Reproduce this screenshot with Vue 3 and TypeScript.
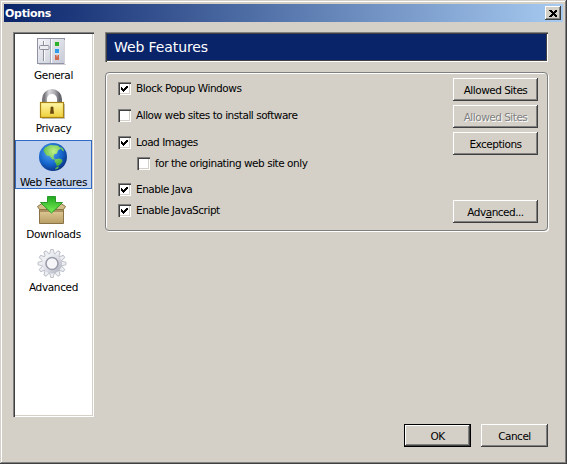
<script setup lang="ts">
interface Opt { label: string; checked: boolean; sub?: boolean; gap: number }
const options: Opt[] = [
  { label: 'Block Popup Windows', checked: true, gap: 0 },
  { label: 'Allow web sites to install software', checked: false, gap: 11 },
  { label: 'Load Images', checked: true, gap: 11 },
  { label: 'for the originating web site only', checked: false, sub: true, gap: 5 },
  { label: 'Enable Java', checked: true, gap: 10 },
  { label: 'Enable JavaScript', checked: true, gap: 5 },
]
const teeth: number[] = Array.from({ length: 12 }, (_, i) => i * 30)
</script>

<template>
  <div class="window">
    <header class="titlebar">
      <span class="title">Options</span>
      <button class="close" aria-label="Close">
        <svg width="8" height="7" viewBox="0 0 8 7"><path d="M0 0h2l2 2 2-2h2v1L5.500 3.500 8 6v1H6L4 5 2 7H0V6l2.500-2.500L0 1z" fill="#000" shape-rendering="crispEdges"/></svg>
      </button>
    </header>
    <div class="body">
      <div class="main">
        <nav class="sidebar">
          <div class="nav-item">
            <svg width="32" height="34" viewBox="0 0 32 34">
              <defs><linearGradient id="panel" x1="0" y1="0" x2="1" y2="1"><stop offset="0" stop-color="#f4f4f8"/><stop offset="1" stop-color="#c6cad6"/></linearGradient></defs>
              <rect x="0.500" y="4.500" width="27" height="25" fill="url(#panel)" stroke="#8f93a4"/>
              <path d="M27.500 6v25M2 30.500h27" stroke="#d2d2d6"/>
              <path d="M13.500 5v24" stroke="#a8acba"/><path d="M14.500 5v24" stroke="#fff"/>
              <path d="M6.500 7v20" stroke="#8b8f9c"/><path d="M7.500 7v20" stroke="#fff"/>
              <rect x="2.500" y="11.500" width="9.500" height="4" rx="1" fill="#eceef2" stroke="#8d909c"/>
              <rect x="17.500" y="7.500" width="5" height="5" fill="#2db02d" stroke="#dfe6d8"/>
              <rect x="17.500" y="14.500" width="5" height="5" fill="#2f9ae8" stroke="#d4e0ee"/>
              <path d="M18 21h1.500v1.500h1V21H22v5h-4z" fill="#cf6a4e"/>
            </svg>
            <span>General</span>
          </div>
          <div class="nav-item">
            <svg width="32" height="34" viewBox="0 0 32 34">
              <defs>
                <linearGradient id="shackle" x1="0" y1="0" x2="1" y2="0"><stop offset="0" stop-color="#77777c"/><stop offset=".3" stop-color="#dcdce0"/><stop offset=".7" stop-color="#a8a8ae"/><stop offset="1" stop-color="#66666e"/></linearGradient>
                <linearGradient id="lockb" x1="0" y1="0" x2="0" y2="1"><stop offset="0" stop-color="#fff7a8"/><stop offset="1" stop-color="#efcf3a"/></linearGradient>
              </defs>
              <path d="M7.500 17v-5a7.500 7.500 0 0 1 15 0v5" fill="none" stroke="url(#shackle)" stroke-width="5"/>
              <path d="M27 17h1v15H5v-1h22z" fill="#c4c4c8"/>
              <rect x="3.500" y="15.500" width="23" height="15" fill="url(#lockb)" stroke="#a98410" stroke-width="1.200"/>
              <path d="M15 19.500a1.500 1.500 0 0 1 1.400 2.200l.6 5h-4l.6-5a1.500 1.500 0 0 1 1.400-2.200z" fill="#6b4a10"/>
            </svg>
            <span>Privacy</span>
          </div>
          <div class="nav-item selected">
            <svg width="32" height="34" viewBox="0 0 32 34">
              <defs>
                <radialGradient id="globe" cx=".4" cy=".35" r=".75"><stop offset="0" stop-color="#58a8f2"/><stop offset=".55" stop-color="#1566cc"/><stop offset="1" stop-color="#082470"/></radialGradient>
                <radialGradient id="land" cx=".5" cy=".3" r=".8"><stop offset="0" stop-color="#c0f288"/><stop offset="1" stop-color="#2fa22c"/></radialGradient>
              </defs>
              <circle cx="16" cy="17" r="14" fill="url(#globe)"/>
              <path d="M8 7.500l5-2.500 8 .5 3 3-3 2-1 3-3 1-.5 3 2 2h-3l-3-3.500-3-.5-2-3-1-2zM18 19.500l4-1 3 1 .5 2-2.500 3-3 2-1-3-1.500-2zM23 6.500l3 2 1 3-2-1z" fill="url(#land)"/>
              <path d="M19 27.500l3-1-1 2-3 1z" fill="#62c044"/>
            </svg>
            <span>Web Features</span>
          </div>
          <div class="nav-item">
            <svg width="32" height="34" viewBox="0 0 32 34">
              <defs>
                <linearGradient id="box" x1="0" y1="0" x2="0" y2="1"><stop offset="0" stop-color="#e2cc98"/><stop offset="1" stop-color="#b89e66"/></linearGradient>
                <linearGradient id="arrow" x1="0" y1="0" x2="0" y2="1"><stop offset="0" stop-color="#1fa81f"/><stop offset="1" stop-color="#7cf058"/></linearGradient>
              </defs>
              <path d="M2.500 16.500h24v14h-24z" fill="url(#box)" stroke="#8a7344"/>
              <path d="M2.500 16.500L0.500 13.500l6-4 4 7zM26.500 16.500l2-3-6-4-4 7z" fill="#d2bc88" stroke="#8a7344"/>
              <path d="M3 17h23v2H3z" fill="#8d7445" opacity=".65"/>
              <path d="M10.500 3.500h8v6h7L14.500 20 3.500 9.500h7z" fill="url(#arrow)" stroke="#2a9a2a"/>
            </svg>
            <span>Downloads</span>
          </div>
          <div class="nav-item">
            <svg width="32" height="34" viewBox="0 0 32 34">
              <defs><linearGradient id="gear" x1="0" y1="0" x2="1" y2="1"><stop offset="0" stop-color="#fcfcfe"/><stop offset=".55" stop-color="#dadce4"/><stop offset="1" stop-color="#a4a8b4"/></linearGradient></defs>
              <g stroke="#a8acb8" stroke-width=".7" fill="#eceef2">
                <path v-for="a in teeth" :key="a" d="M12.500 8.500l1.200-5h2.600l1.200 5z" :transform="`rotate(${a} 15 17.500)`"/>
              </g>
              <circle cx="15" cy="17.500" r="10" fill="url(#gear)"/>
              <circle cx="15" cy="17.500" r="6" fill="#f6f6f8" stroke="#9a9eab" stroke-width="1.600"/>
            </svg>
            <span>Advanced</span>
          </div>
        </nav>
        <section class="content">
          <h1 class="heading">Web Features</h1>
          <div class="group">
            <div class="checks">
              <label v-for="o in options" :key="o.label" class="check" :class="{ sub: o.sub }" :style="{ marginTop: o.gap + 'px' }">
                <span class="box">
                  <svg v-if="o.checked" width="9" height="9" viewBox="0 0 9 9"><path d="M1 3h1v1h1v1h1V4h1V3h1V2h2v2H7v1H6v1H5v1H4v1H3V7H2V6H1z" fill="#000" shape-rendering="crispEdges"/></svg>
                </span>
                <span>{{ o.label }}</span>
              </label>
            </div>
            <div class="side-buttons">
              <button class="btn wide">Allowed Sites</button>
              <button class="btn wide disabled">Allowed Sites</button>
              <button class="btn wide">Exceptions</button>
              <button class="btn wide adv">Adv<u>a</u>nced...</button>
            </div>
          </div>
        </section>
      </div>
      <footer class="footer">
        <button class="btn dlg default">OK</button>
        <button class="btn dlg">Cancel</button>
      </footer>
    </div>
  </div>
</template>

<style>
html, body { margin: 0; background: #d4d0c8; }
</style>

<style scoped>
.window {
  width: 567px;
  height: 464px;
  box-sizing: border-box;
  padding: 4px;
  background: #d4d0c8;
  display: flex;
  flex-direction: column;
  font-family: "DejaVu Sans", sans-serif;
  font-size: 10.500px;
  letter-spacing: -0.470px;
  color: #000;
  box-shadow: inset -1px -1px 0 #404040, inset 1px 1px 0 #d4d0c8, inset -2px -2px 0 #808080, inset 2px 2px 0 #fff;
}
.titlebar {
  height: 18px;
  flex: none;
  display: flex;
  align-items: center;
  justify-content: space-between;
  padding: 0 2px 0 1px;
  background: linear-gradient(90deg, #0a246a, #a6caf0);
  color: #fff;
}
.title { font-weight: 700; font-size: 11px; letter-spacing: -0.300px; }
.close {
  width: 16px;
  height: 14px;
  padding: 0;
  border: 0;
  background: #d4d0c8;
  display: flex;
  align-items: center;
  justify-content: center;
  box-shadow: inset -1px -1px 0 #404040, inset 1px 1px 0 #fff, inset -2px -2px 0 #808080;
}
.body {
  flex: 1;
  display: flex;
  flex-direction: column;
  padding: 10px 15px 13px 9px;
}
.main { display: flex; gap: 11px; height: 385px; flex: none; }
.sidebar {
  width: 81px;
  flex: none;
  box-sizing: border-box;
  background: #fff;
  padding: 2px;
  display: flex;
  flex-direction: column;
  gap: 4px;
  box-shadow: inset 1px 1px 0 #808080, inset 2px 2px 0 #404040, inset -1px -1px 0 #fff, inset -2px -2px 0 #d4d0c8;
}
.nav-item {
  width: 77px;
  height: 49px;
  box-sizing: border-box;
  flex: none;
  display: flex;
  flex-direction: column;
  align-items: center;
  justify-content: space-between;
  padding-bottom: 1px;
  line-height: 13px;
  letter-spacing: -0.350px;
}
.nav-item svg { flex: none; align-self: flex-start; margin-left: 22px; }
.nav-item.selected { background: #c1d2ee; box-shadow: inset 0 0 0 1px #316ac5; padding-bottom: 0; }
.content { flex: 1; display: flex; flex-direction: column; gap: 10px; min-width: 0; }
.heading {
  margin: 0;
  height: 30px;
  box-sizing: border-box;
  padding-left: 9px;
  display: flex;
  align-items: center;
  background: #0a246a;
  color: #fff;
  font-size: 14px;
  font-weight: 400;
  letter-spacing: -0.100px;
  box-shadow: inset 1px 1px 0 #808080, inset 2px 2px 0 #404040, inset -1px -1px 0 #fff, inset -2px -2px 0 #404040;
}
.group {
  height: 159px;
  box-sizing: border-box;
  border: 1px solid #808080;
  border-radius: 4px;
  box-shadow: inset 1px 1px 0 #fff, 1px 1px 0 #fff;
  display: flex;
  justify-content: space-between;
  padding: 5px 9px 0 12px;
}
.checks { display: flex; flex-direction: column; padding-top: 2px; }
.check { display: flex; align-items: center; gap: 5px; height: 16px; }
.check.sub { margin-left: 19px; }
.box {
  width: 13px;
  height: 13px;
  flex: none;
  box-sizing: border-box;
  background: #fff;
  display: flex;
  align-items: center;
  justify-content: center;
  box-shadow: inset 1px 1px 0 #808080, inset 2px 2px 0 #404040, inset -1px -1px 0 #fff, inset -2px -2px 0 #d4d0c8;
}
.side-buttons { display: flex; flex-direction: column; gap: 4px; }
.btn {
  padding: 0;
  border: 0;
  background: #d4d0c8;
  font: inherit;
  letter-spacing: -0.500px;
  color: #000;
  box-shadow: inset -1px -1px 0 #404040, inset 1px 1px 0 #fff, inset -2px -2px 0 #808080;
}
.btn.wide { width: 85px; height: 23px; }
.btn.adv { margin-top: 41px; }
.btn.disabled { color: #808080; text-shadow: 1px 1px 0 #fff; }
.footer { display: flex; justify-content: flex-end; gap: 10px; margin-top: auto; }
.btn.dlg { width: 67px; height: 23px; }
.btn.default {
  box-shadow: inset 0 0 0 1px #000, inset -2px -2px 0 #404040, inset 2px 2px 0 #fff, inset -3px -3px 0 #808080;
}
</style>
